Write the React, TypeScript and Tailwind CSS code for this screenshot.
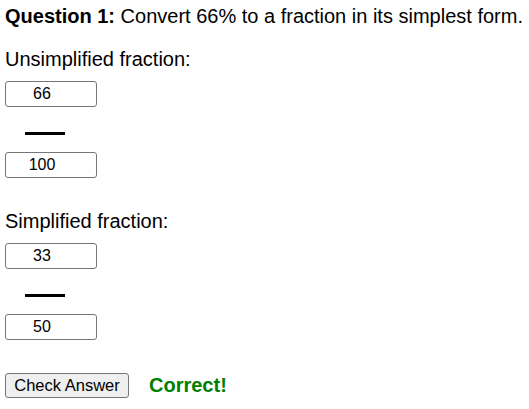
import { useState } from "react";

function FractionInputs({ top, bottom }: { top: string; bottom: string }) {
  const inputCls =
    "block w-[92px] h-[26px] border border-[#767676] rounded-[3px] bg-white text-center pr-[18px] text-[16px] text-black outline-none";
  return (
    <div className="flex flex-col">
      <input className={inputCls} defaultValue={top} />
      <div className="ml-[20px] mt-[25px] mb-[17px] w-[40px] h-[3px] bg-black" />
      <input className={inputCls} defaultValue={bottom} />
    </div>
  );
}

export default function App() {
  const [result] = useState("Correct!");

  return (
    <div
      className="p-[5px] text-black"
      style={{ fontFamily: '"Liberation Sans", Arial, sans-serif' }}
    >
      <p className="text-[20px] leading-[23px] whitespace-nowrap">
        <span className="font-bold">Question 1:</span> Convert 66% to a fraction in
        its simplest form.
      </p>

      <p className="mt-[20px] mb-[10px] text-[20px] leading-[23px]">
        Unsimplified fraction:
      </p>
      <FractionInputs top="66" bottom="100" />

      <p className="mt-[32px] mb-[10px] text-[20px] leading-[23px]">
        Simplified fraction:
      </p>
      <FractionInputs top="33" bottom="50" />

      <div className="mt-[33px] flex items-center gap-[20px]">
        <button className="h-[25px] w-[124px] border border-[#767676] rounded-[3px] bg-[#efefef] text-[16.5px] leading-[23px] text-black">
          Check Answer
        </button>
        <span className="text-[20px] leading-[23px] font-bold text-[#008000]">{result}</span>
      </div>
    </div>
  );
}
